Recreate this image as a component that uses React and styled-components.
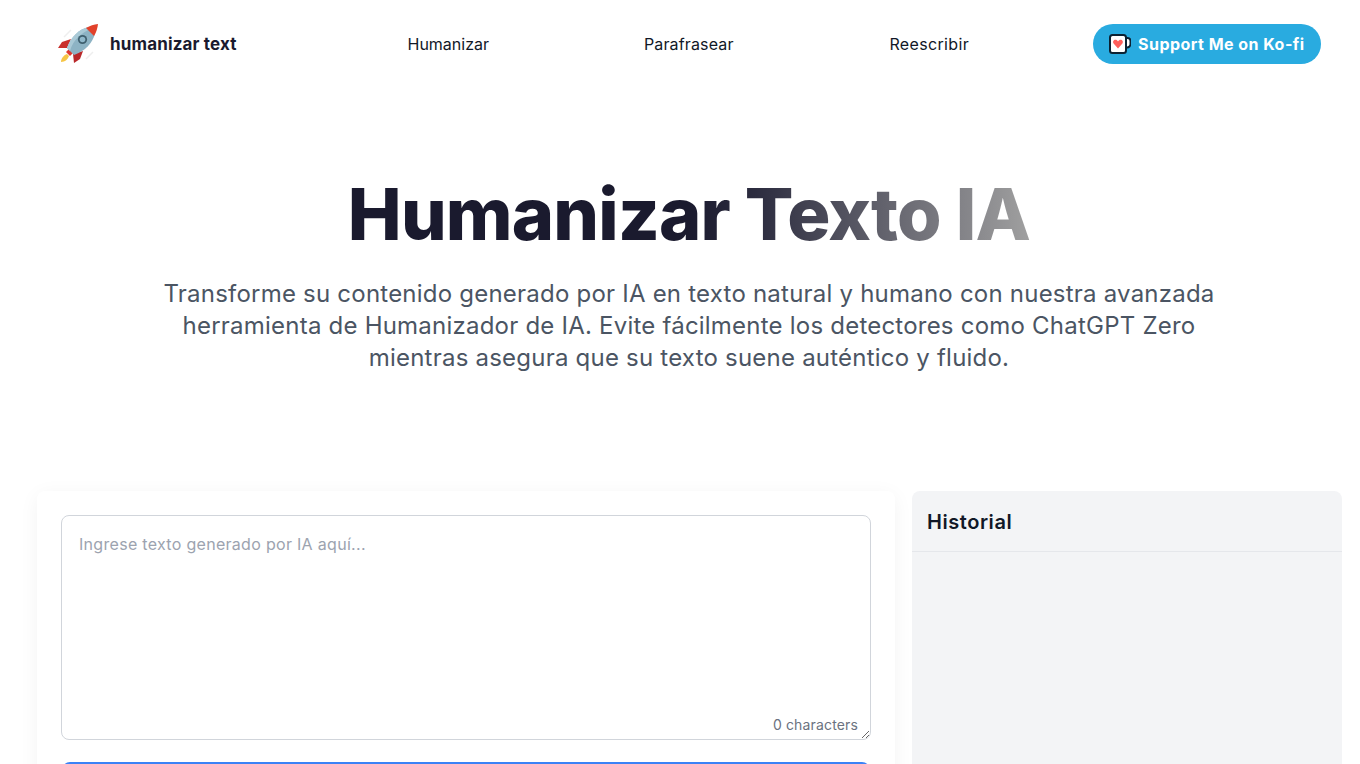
import React from "react";
import styled, { createGlobalStyle } from "styled-components";

const GlobalStyle = createGlobalStyle`
  html, body {
    margin: 0;
    height: 764px;
    overflow: hidden;
    background: #fff;
    font-family: Inter, "Noto Sans", sans-serif;
  }
  * { box-sizing: border-box; }
`;

const Header = styled.header`
  display: flex;
  align-items: center;
  height: 88px;
  padding: 0 39px 0 58px;
`;

const Brand = styled.a`
  display: flex;
  align-items: center;
  gap: 12px;
  width: 270px;
  font-size: 17px;
  font-weight: 700;
  letter-spacing: 0.15px;
  color: #1a1a2e;
`;

const Nav = styled.nav`
  display: grid;
  grid-template-columns: repeat(3, 240.5px);
  justify-items: center;
  width: 722px;
`;

const NavLink = styled.a`
  font-size: 16px;
  letter-spacing: ${(p) => p.$spacing || 0}px;
  color: #111827;
`;

const KofiButton = styled.a`
  display: flex;
  align-items: center;
  gap: 7px;
  width: 228px;
  height: 40px;
  margin-left: auto;
  padding-left: 15px;
  border-radius: 20px;
  background: #29abe0;
  color: #fff;
  font-size: 16px;
  font-weight: 700;
  letter-spacing: 0.47px;
  white-space: nowrap;
`;

const Hero = styled.section`
  display: flex;
  flex-direction: column;
  align-items: center;
  padding: 83px 0 0 18px;
  height: 403px;
`;

const Title = styled.h1`
  margin: 0;
  font-size: 72px;
  line-height: 86px;
  font-weight: 800;
  letter-spacing: -0.8px;
  background: linear-gradient(90deg, #1a1a2e 0%, #1a1a2e 50%, #2d2d40 60%, #a0a0a0 100%);
  -webkit-background-clip: text;
  background-clip: text;
  color: transparent;
`;

const Subtitle = styled.p`
  width: 1080px;
  margin: 21px 0 0;
  font-size: 24px;
  line-height: 32px;
  letter-spacing: 0.22px;
  text-align: center;
  color: #4b5563;
`;

const Workspace = styled.main`
  display: grid;
  grid-template-columns: 858px 430px;
  gap: 17px;
  padding: 0 18px 0 37px;
`;

const EditorCard = styled.section`
  padding: 24px;
  border-radius: 8px;
  background: #fff;
  box-shadow: 0 4px 20px rgba(0, 0, 0, 0.05);
`;

const EditorField = styled.div`
  position: relative;
  width: 810px;
`;

const Input = styled.textarea`
  display: block;
  width: 100%;
  height: 225px;
  padding: 16px 17px;
  border: 1px solid #d1d5db;
  border-radius: 8px;
  outline: none;
  font-family: inherit;
  font-size: 16px;
  line-height: 24px;
  letter-spacing: 0.3px;
  color: #111827;

  &::placeholder {
    color: #9ca3af;
  }
`;

const Count = styled.span`
  position: absolute;
  right: 13px;
  bottom: 7px;
  font-size: 14px;
  letter-spacing: 0.15px;
  color: #6b7280;
`;

const SubmitButton = styled.button`
  display: block;
  width: 808px;
  height: 48px;
  margin: 22px 0 0 1px;
  border: 0;
  border-radius: 8px;
  background: #3b82f6;
`;

const HistoryPanel = styled.aside`
  height: 500px;
  border-radius: 8px;
  background: #f3f4f6;
`;

const HistoryHeader = styled.div`
  height: 61px;
  padding: 2px 15px 0;
  display: flex;
  align-items: center;
  border-bottom: 1px solid #e5e7eb;
`;

const HistoryTitle = styled.h2`
  margin: 0;
  font-size: 20px;
  font-weight: 600;
  letter-spacing: 0.55px;
  color: #111827;
`;

const RocketIcon = () => (
  <svg width="40" height="40" viewBox="0 0 40 40">
    <path d="M6 13 L13 6 M28 35 L35 28" stroke="#eeeeee" strokeWidth="1.5" />
    <path d="M3 38 C3 34 6 31 9 30 L11 32 C10 35 7 38 3 38 Z" fill="#f6c544" />
    <path d="M13 15 L4 18 L0 24 L9 24 Z" fill="#c9302c" />
    <path d="M25 27 L22 35 L16 39 L15 30 Z" fill="#b9282a" />
    <path d="M8 28 L14 22 L18 26 L12 32 Z" fill="#e0392f" />
    <path d="M9 24 C13 13 21 5 31 3 L37 9 C35 19 27 27 16 31 Z" fill="#8db3c4" />
    <path d="M9 24 C13 13 21 5 31 3 L33 5 C24 8 15 16 12 27 Z" fill="#a9c9d6" />
    <path d="M28 4 C32 1.5 36 0.5 40 0 C39.5 4 38.5 8 36 12 Z" fill="#e2412a" />
    <circle cx="24.5" cy="15.5" r="4.6" fill="#3f5f6e" />
    <circle cx="24.5" cy="15.5" r="2.8" fill="#8fb8cb" />
  </svg>
);

const KofiIcon = () => (
  <svg width="23" height="22" viewBox="0 0 23 22">
    <path d="M18 5 h1.5 a3 3 0 0 1 3 3 v3 a3.5 3.5 0 0 1 -3.5 3.5 H17" fill="#fff" stroke="#0b2233" strokeWidth="2" />
    <rect x="2" y="2" width="16" height="18" rx="2.5" fill="#fff" stroke="#0b2233" strokeWidth="2" />
    <path d="M10 15.5 L5.6 10.6 C4.4 8.8 5.6 6.8 7.4 6.8 C8.5 6.8 9.4 7.4 10 8.4 C10.6 7.4 11.5 6.8 12.6 6.8 C14.4 6.8 15.6 8.8 14.4 10.6 Z" fill="#ff5e5b" />
  </svg>
);

const App = () => {
  return (
    <>
      <GlobalStyle />
      <Header>
        <Brand>
          <RocketIcon />
          humanizar text
        </Brand>
        <Nav>
          <NavLink>Humanizar</NavLink>
          <NavLink $spacing={0.15}>Parafrasear</NavLink>
          <NavLink $spacing={0.35}>Reescribir</NavLink>
        </Nav>
        <KofiButton>
          <KofiIcon />
          Support Me on Ko-fi
        </KofiButton>
      </Header>
      <Hero>
        <Title>Humanizar Texto IA</Title>
        <Subtitle>
          Transforme su contenido generado por IA en texto natural y humano con nuestra avanzada
          herramienta de Humanizador de IA. Evite fácilmente los detectores como ChatGPT Zero
          mientras asegura que su texto suene auténtico y fluido.
        </Subtitle>
      </Hero>
      <Workspace>
        <EditorCard>
          <EditorField>
            <Input placeholder="Ingrese texto generado por IA aquí..." />
            <Count>0 characters</Count>
          </EditorField>
          <SubmitButton aria-label="Humanizar" />
        </EditorCard>
        <HistoryPanel>
          <HistoryHeader>
            <HistoryTitle>Historial</HistoryTitle>
          </HistoryHeader>
        </HistoryPanel>
      </Workspace>
    </>
  );
};

export default App;
